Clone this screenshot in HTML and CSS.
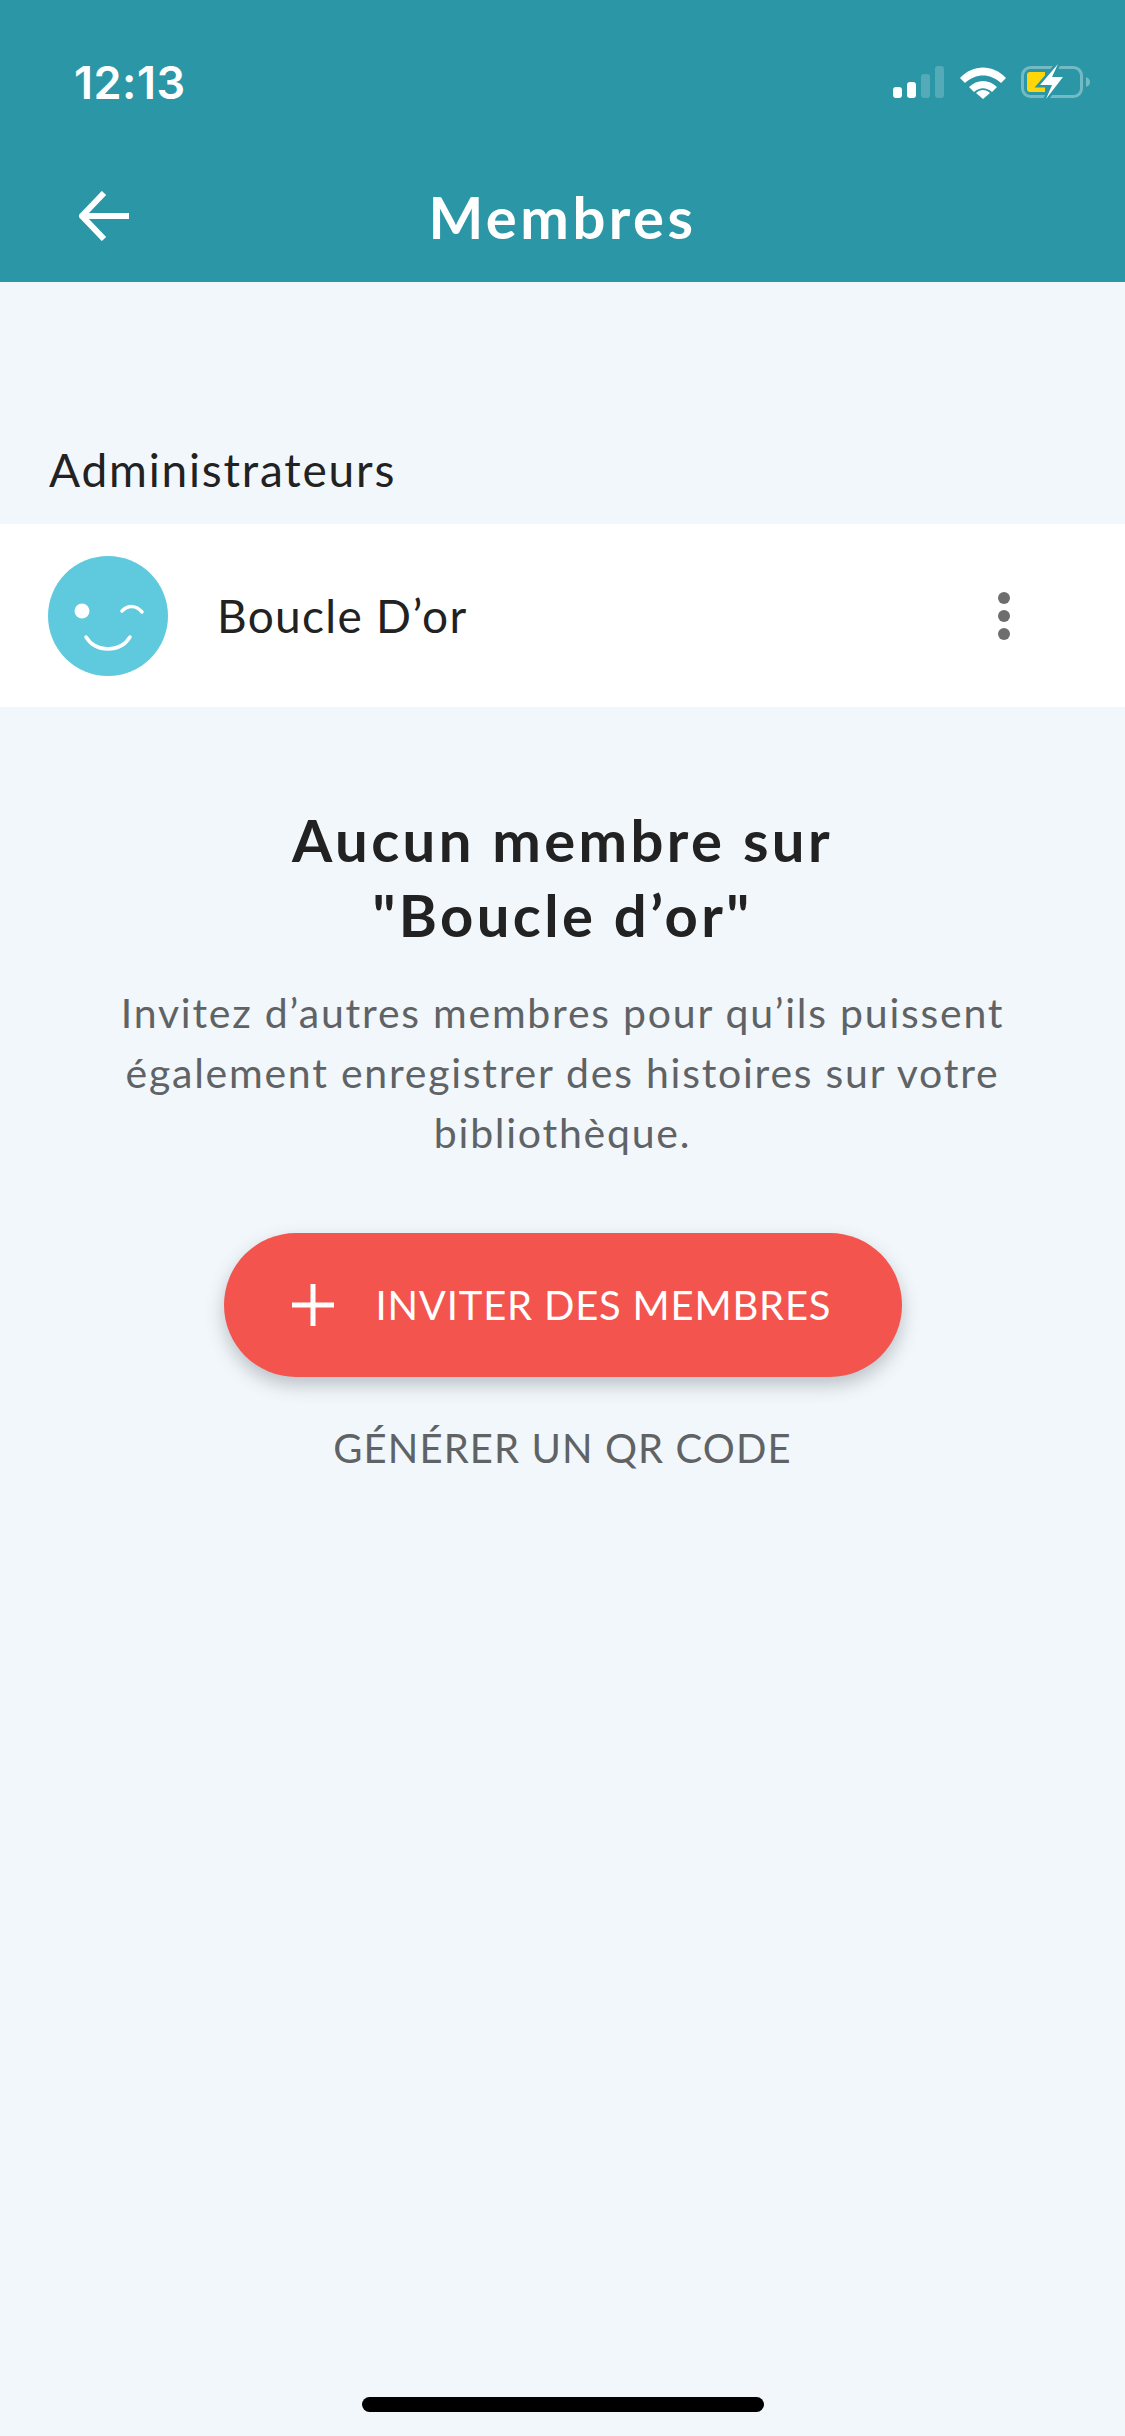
FILE: index.html
```html
<!DOCTYPE html>
<html lang="fr">
<head>
    <meta charset="UTF-8">
    <meta name="viewport" content="width=device-width, initial-scale=1.0">
    <title>Membres</title>
    <link rel="stylesheet" href="styles.css">
</head>
<body>
    <div class="screen">
        <!-- Header -->
        <div class="header">
            <div class="status-bar">
                <span class="time">12:13</span>
                <div class="status-icons">
                    <svg width="52" height="33" viewBox="0 0 52 33">
                        <rect x="0" y="21" width="9" height="11" rx="3" fill="#fff"/>
                        <rect x="14" y="16" width="9" height="16" rx="3" fill="#fff"/>
                        <rect x="28" y="8" width="9" height="24" rx="3" fill="#fff" opacity="0.2"/>
                        <rect x="42" y="0" width="9" height="32" rx="3" fill="#fff" opacity="0.2"/>
                    </svg>
                    <svg width="46" height="33" viewBox="0 0 46 33">
                        <path d="M0 12 C13 -2 33 -2 46 12 L41 17 C30 7 16 7 5 17 Z" fill="#fff"/>
                        <path d="M9 21 C17 13 29 13 37 21 L32 26 C26 21 20 21 14 26 Z" fill="#fff"/>
                        <path d="M16 27 C20 23 26 23 30 27 L23 33 Z" fill="#fff"/>
                    </svg>
                    <svg width="70" height="36" viewBox="0 0 70 36">
                        <rect x="1.5" y="3.5" width="59" height="29" rx="8" fill="none" stroke="#fff" stroke-width="3" opacity="0.35"/>
                        <path d="M65 13 C68 14 69 16 69 18 C69 20 68 22 65 23 Z" fill="#fff" opacity="0.35"/>
                        <path d="M9 8 H24 V28 H9 C7 28 6 27 6 25 V11 C6 9 7 8 9 8 Z" fill="#ffd60a"/>
                        <path d="M37 0 L19 21 H31 L25 35 L42 13 H31 Z" fill="#fff" stroke="#2a96a6" stroke-width="5" paint-order="stroke"/>
                    </svg>
                </div>
            </div>
            <div class="nav-bar">
                <svg class="back-icon" width="52" height="50" viewBox="0 0 52 50">
                    <path d="M50 25 H4 M25 2 L3 25 L25 48" fill="none" stroke="#fff" stroke-width="6"/>
                </svg>
                <h1>Membres</h1>
            </div>
        </div>

        <!-- Admin list -->
        <div class="section-label">Administrateurs</div>
        <div class="member-row">
            <svg class="avatar" width="120" height="120" viewBox="0 0 120 120">
                <circle cx="60" cy="60" r="60" fill="#5fc9dd"/>
                <circle cx="34" cy="55" r="7.5" fill="#fff"/>
                <path d="M74 55 C80 49 88 49 94 56" fill="none" stroke="#fff" stroke-width="3.5" stroke-linecap="round"/>
                <path d="M38 81 C48 97 72 97 82 81" fill="none" stroke="#fff" stroke-width="3.5" stroke-linecap="round"/>
            </svg>
            <span class="member-name">Boucle D’or</span>
            <div class="more-dots"><i></i><i></i><i></i></div>
        </div>

        <!-- Empty state -->
        <div class="empty">
            <h2>Aucun membre sur<br>"Boucle d’or"</h2>
            <p>Invitez d’autres membres pour qu’ils puissent<br>également enregistrer des histoires sur votre<br>bibliothèque.</p>
            <button class="invite-btn">
                <svg width="42" height="42" viewBox="0 0 42 42">
                    <path d="M21 0 V42 M0 21 H42" stroke="#fff" stroke-width="5"/>
                </svg>
                <span>INVITER DES MEMBRES</span>
            </button>
            <div class="qr-link">GÉNÉRER UN QR CODE</div>
        </div>

        <div class="home-bar"></div>
    </div>
</body>
</html>
```

FILE: styles.css
```css
* {
    margin: 0;
    padding: 0;
    box-sizing: border-box;
}

body {
    background-color: #f2f7fb;
    font-family: 'Lato', 'Open Sans', sans-serif;
}

.screen {
    position: relative;
    width: 1125px;
    height: 2436px;
    overflow: hidden;
}

.header {
    background-color: #2a96a6;
    height: 282px;
    color: white;
}

.status-bar {
    display: flex;
    justify-content: space-between;
    align-items: center;
    height: 116px;
    padding: 48px 34px 0 74px;
}

.time {
    font-family: 'Inter', sans-serif;
    font-size: 45px;
    font-weight: 600;
    letter-spacing: 0.5px;
}

.status-icons {
    display: flex;
    align-items: center;
    gap: 15px;
}

.nav-bar {
    position: relative;
    display: flex;
    justify-content: center;
    align-items: center;
    margin-top: 62px;
    height: 76px;
}

.back-icon {
    position: absolute;
    left: 79px;
    top: 13px;
}

.nav-bar h1 {
    font-size: 58px;
    font-weight: 700;
    letter-spacing: 3.5px;
}

.section-label {
    margin-top: 160px;
    padding-left: 49px;
    height: 82px;
    font-size: 46px;
    line-height: 56px;
    letter-spacing: 1.8px;
    color: #222;
}

.member-row {
    display: flex;
    align-items: center;
    height: 183px;
    padding: 0 48px;
    background-color: white;
}

.member-name {
    margin-left: 49px;
    font-size: 46px;
    letter-spacing: 1.3px;
    color: #222;
}

.more-dots {
    display: flex;
    flex-direction: column;
    gap: 6px;
    margin-left: auto;
    margin-right: 67px;
}

.more-dots i {
    display: block;
    width: 12px;
    height: 12px;
    border-radius: 50%;
    background-color: #6e6e6e;
}

.empty {
    display: flex;
    flex-direction: column;
    align-items: center;
    text-align: center;
    padding-top: 95px;
}

.empty h2 {
    font-size: 58px;
    font-weight: 700;
    line-height: 75px;
    letter-spacing: 3.4px;
    color: #222;
}

.empty p {
    margin-top: 31px;
    font-size: 41px;
    line-height: 60px;
    letter-spacing: 1.75px;
    color: #5f6366;
}

.invite-btn {
    display: flex;
    align-items: center;
    gap: 42px;
    width: 678px;
    height: 144px;
    margin-top: 70px;
    padding-left: 68px;
    border: none;
    border-radius: 72px;
    background-color: #f3544d;
    box-shadow: 0 8px 18px rgba(60, 70, 80, 0.3);
    color: white;
    font-family: inherit;
    font-size: 40px;
    letter-spacing: 0.8px;
}

.qr-link {
    margin-top: 47px;
    font-size: 40px;
    letter-spacing: 1.1px;
    color: #5f6366;
}

.home-bar {
    position: absolute;
    left: 362px;
    bottom: 24px;
    width: 402px;
    height: 15px;
    border-radius: 8px;
    background-color: #000;
}
```
